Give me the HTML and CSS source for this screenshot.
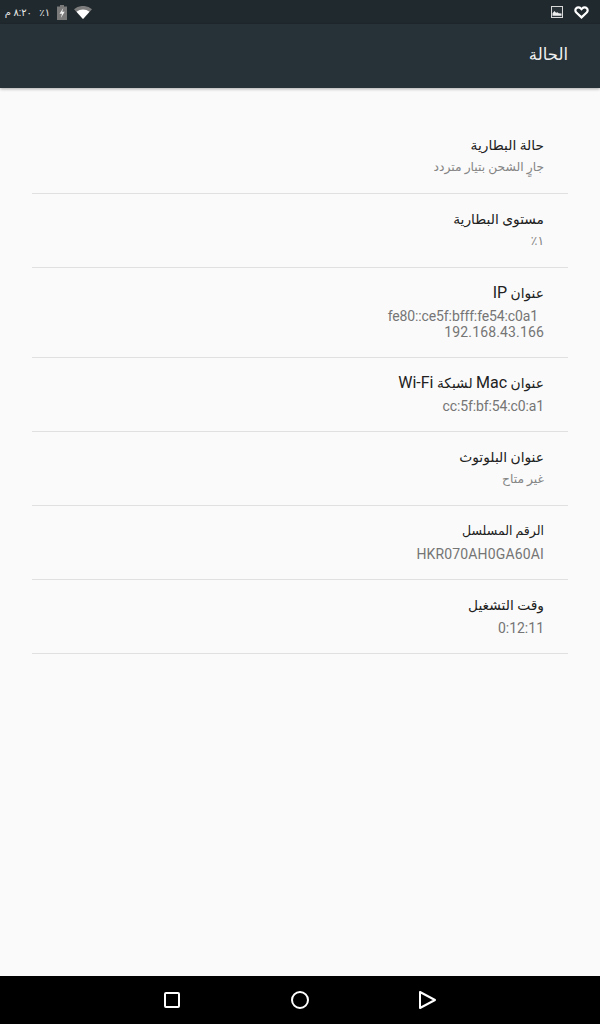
FILE: index.html
```html
<!DOCTYPE html>
<html lang="ar">
<head>
<meta charset="utf-8">
<title>الحالة</title>
<link rel="stylesheet" href="styles.css">
</head>
<body>
<div class="status">
  <div class="status-left">
    <span class="st-text clock">٨:٢٠ م</span>
    <span class="st-text pct">١٪</span>
    <svg class="ic-batt" width="10" height="15" viewBox="0 0 10 15"><path d="M3 0h4v1.500h3V15H0V1.500h3z" fill="#7a7a7a"/><path d="M6.300 3 2.500 8.800H5L3.800 13l3.900-6.200H5.200z" fill="#f2f2f2"/></svg>
    <svg class="ic-wifi" width="18" height="13" viewBox="0 0 18 13"><path d="M0 3.200a14 14 0 0 1 18 0l-9 9.800z" fill="#7d7d7d"/><path d="M2.500 5.700a10.500 10.500 0 0 1 13 0L9 13z" fill="#fff"/></svg>
  </div>
  <div class="status-right">
    <svg class="ic-pic" width="12" height="12" viewBox="0 0 12 12"><rect x="0.500" y="0.500" width="11" height="11" fill="#2a3338" stroke="#d8d8d8"/><path d="M1.500 9.800V7.200L3.500 5l1.500 1.800 1.500-.6 1.200 1 2.800.4v2.200z" fill="#eee"/></svg>
    <svg class="ic-heart" width="15" height="13" viewBox="0 0 15 13"><path d="M7.500 11.400 2.300 6.500A3 3 0 0 1 2.200 2.200 3.100 3.100 0 0 1 6.600 2.300l.9.900.9-.9a3.100 3.100 0 0 1 4.400-.1 3 3 0 0 1-.1 4.300z" fill="none" stroke="#fff" stroke-width="2.200"/></svg>
  </div>
</div>
<header class="bar"><h1>الحالة</h1></header>
<main class="list">
  <div class="row"><div class="t">حالة البطارية</div><div class="s">جارٍ الشحن بتيار متردد</div></div>
  <div class="row"><div class="t">مستوى البطارية</div><div class="s">١٪</div></div>
  <div class="row"><div class="t">عنوان <span class="lat">IP</span></div><div class="s lat-s"><span class="line-inset"><bdi class="narrow">fe80::ce5f:bfff:fe54:c0a1</bdi></span><br><bdi class="wide">192.168.43.166</bdi></div></div>
  <div class="row"><div class="t">عنوان <span class="lat">Mac</span> لشبكة <span class="lat">Wi-Fi</span></div><div class="s lat-s"><bdi class="narrow">cc:5f:bf:54:c0:a1</bdi></div></div>
  <div class="row"><div class="t">عنوان البلوتوث</div><div class="s">غير متاح</div></div>
  <div class="row"><div class="t tight">الرقم المسلسل</div><div class="s lat-s"><bdi class="wide">HKR070AH0GA60AI</bdi></div></div>
  <div class="row"><div class="t">وقت التشغيل</div><div class="s lat-s"><bdi>0:12:11</bdi></div></div>
</main>
<nav class="nav">
  <svg class="nav-a" width="16" height="16" viewBox="0 0 16 16"><rect x="1" y="1" width="14" height="14" rx="1" fill="none" stroke="#fff" stroke-width="2"/></svg>
  <svg class="nav-b" width="18" height="18" viewBox="0 0 18 18"><circle cx="9" cy="9" r="8" fill="none" stroke="#fff" stroke-width="2"/></svg>
  <svg width="17" height="18" viewBox="0 0 17 18"><path d="M1 1v16L16 9z" fill="none" stroke="#fff" stroke-width="2" stroke-linejoin="round"/></svg>
</nav>
</body>
</html>
```
FILE: styles.css
```css
* { box-sizing: border-box; }
html, body { margin: 0; padding: 0; }
body {
  width: 600px;
  height: 1024px;
  background: #fafafa;
  font-family: "Roboto", "Noto Sans", "DejaVu Sans", sans-serif;
  display: flex;
  flex-direction: column;
  overflow: hidden;
}
.status {
  height: 24px;
  background: #20292e;
  display: flex;
  justify-content: space-between;
  align-items: center;
  padding: 0 11px 0 8px;
  direction: ltr;
}
.status-right { display: flex; align-items: center; gap: 11px; }
.status-left { display: flex; align-items: center; }
.st-text { color: #e8e8e8; font-size: 10px; direction: rtl; width: 24px; white-space: nowrap; }
.pct { width: 8px; margin-left: 10px; }
.ic-batt { margin-left: 7px; }
.ic-wifi { margin-left: 7px; }
.bar {
  height: 64px;
  background: #263238;
  padding: 0 32px;
  direction: rtl;
  display: flex;
  align-items: center;
  box-shadow: 0 1px 3px rgba(0,0,0,.32);
}
.bar h1 { margin: 0; font-size: 16.500px; font-weight: 400; color: #f0f0f0; position: relative; top: -2px; }
.list { flex: 1; padding: 32px 32px 0; direction: rtl; }
.row {
  padding: 14px 24px 18px 0;
  border-bottom: 1px solid #e0e0e0;
}
.t { font-size: 13.800px; line-height: 22px; height: 25px; color: #212121; white-space: nowrap; }
.tight { font-size: 12.500px; }
.lat { font-size: 16px; }
.s { font-size: 12.300px; line-height: 16px; color: #858585; text-align: right; }
.lat-s { font-size: 14px; color: #757575; margin-top: 1px; margin-bottom: -1px; }
.line-inset { padding-right: 6px; }
.narrow { letter-spacing: -.12px; }
.wide { letter-spacing: .15px; }
.nav {
  height: 48px;
  background: #000;
  display: flex;
  align-items: center;
  justify-content: center;
  direction: ltr;
}
.nav-a { margin-right: 111px; }
.nav-b { margin-right: 110px; }
```
